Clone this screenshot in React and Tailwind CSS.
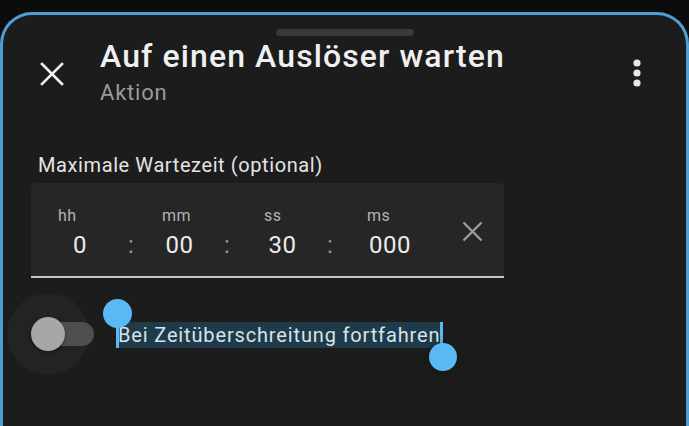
import React from 'react';

const font = { fontFamily: 'Roboto, "Noto Sans", sans-serif' };

const TimeColumn = ({ label, value, width }) => (
  <div className="flex flex-col" style={{ width }}>
    <span className="text-[16px] leading-[20px] tracking-[0.5px] text-[#b3b3b3]">{label}</span>
    <span className="mt-[5px] text-center text-[24px] leading-[28px] tracking-[0.5px] text-[#ececec]">{value}</span>
  </div>
);

const Colon = ({ width, pad }) => (
  <div className="flex flex-col" style={{ width, paddingLeft: pad }}>
    <span className="h-[25px]" />
    <span className="text-[24px] leading-[28px] text-[#9a9a9a]">:</span>
  </div>
);

const App = () => {
  return (
    <div className="w-[689px] h-[426px] overflow-hidden bg-[#0c0c0c] pt-[12px]" style={font}>
      <div className="h-[430px] rounded-t-[32px] border-[3px] border-b-0 border-[#4d9ed2] bg-[#1c1c1c]">
        {/* drag handle */}
        <div className="mx-auto mt-[14px] h-[7px] w-[138px] rounded-full bg-[#393939]" />

        {/* header */}
        <div className="flex items-start pl-[37px] pr-[45px]">
          <svg className="mt-[26px] shrink-0" width="24" height="24" viewBox="0 0 24 24">
            <path d="M2 2 L22 22 M22 2 L2 22" stroke="#f2f2f2" strokeWidth="2.6" strokeLinecap="square" />
          </svg>
          <div className="ml-[36px] mt-[2px] flex flex-col">
            <span className="text-[32px] leading-[36px] font-medium tracking-[1.1px] text-[#f0f0f0]">Auf einen Auslöser warten</span>
            <span className="mt-[6px] text-[22px] leading-[26px] tracking-[0.8px] text-[#9b9b9b]">Aktion</span>
          </div>
          <svg className="ml-auto mt-[23px] shrink-0" width="8" height="28" viewBox="0 0 8 28">
            <circle cx="4" cy="4" r="3.6" fill="#e8e8e8" />
            <circle cx="4" cy="14" r="3.6" fill="#e8e8e8" />
            <circle cx="4" cy="24" r="3.6" fill="#e8e8e8" />
          </svg>
        </div>

        {/* timeout field */}
        <div className="mt-[47px] pl-[35px] text-[20px] leading-[24px] tracking-[0.6px] text-[#e4e4e4]">Maximale Wartezeit (optional)</div>
        <div className="ml-[28px] mt-[6px] flex h-[95px] w-[473px] items-start rounded-t-[5px] border-b-2 border-[#c6c6c6] bg-[#262626] pl-[27px] pr-[21px] pt-[23px]">
          <TimeColumn label="hh" value="0" width={44} />
          <Colon width={60} pad={26} />
          <TimeColumn label="mm" value="00" width={35} />
          <Colon width={67} pad={27} />
          <TimeColumn label="ss" value="30" width={37} />
          <Colon width={66} pad={26} />
          <TimeColumn label="ms" value="000" width={46} />
          <svg className="ml-auto mt-[15px]" width="21" height="21" viewBox="0 0 21 21">
            <path d="M1.5 1.5 L19.5 19.5 M19.5 1.5 L1.5 19.5" stroke="#9c9c9c" strokeWidth="2.4" />
          </svg>
        </div>

        {/* continue on timeout switch */}
        <div className="mt-[15px] flex items-center">
          <div className="relative ml-[4px] h-[82px] w-[86px] shrink-0">
            <div className="absolute left-0 top-0 h-[82px] w-[82px] rounded-full bg-[#232323]" />
            <div className="absolute left-[36px] top-[29px] h-[24px] w-[51px] rounded-full bg-[#4e4e4e]" />
            <div className="absolute left-[24px] top-[24px] h-[34px] w-[34px] rounded-full bg-[#a7a7a7] shadow-[0_1px_3px_rgba(0,0,0,0.5)]" />
          </div>
          <span className="relative ml-[24px] mt-[1px] bg-[#1f3a49] pl-[1px] pr-[1px] text-[20px] leading-[26px] tracking-[0.85px] text-[#d6e4ec]">
            Bei Zeitüberschreitung fortfahren
            <span className="absolute -left-[1px] -top-[9px] h-[35px] w-[3px] bg-[#58b9f3]" />
            <span className="absolute -left-[14px] -top-[23px] h-[29px] w-[29px] rounded-full bg-[#58b9f3]" />
            <span className="absolute -right-[2px] top-0 h-[30px] w-[3px] bg-[#58b9f3]" />
            <span className="absolute -right-[16px] top-[21px] h-[28px] w-[28px] rounded-full bg-[#58b9f3] shadow-[0_0_10px_rgba(0,0,0,0.35)]" />
          </span>
        </div>
      </div>
    </div>
  );
};

export default App;
